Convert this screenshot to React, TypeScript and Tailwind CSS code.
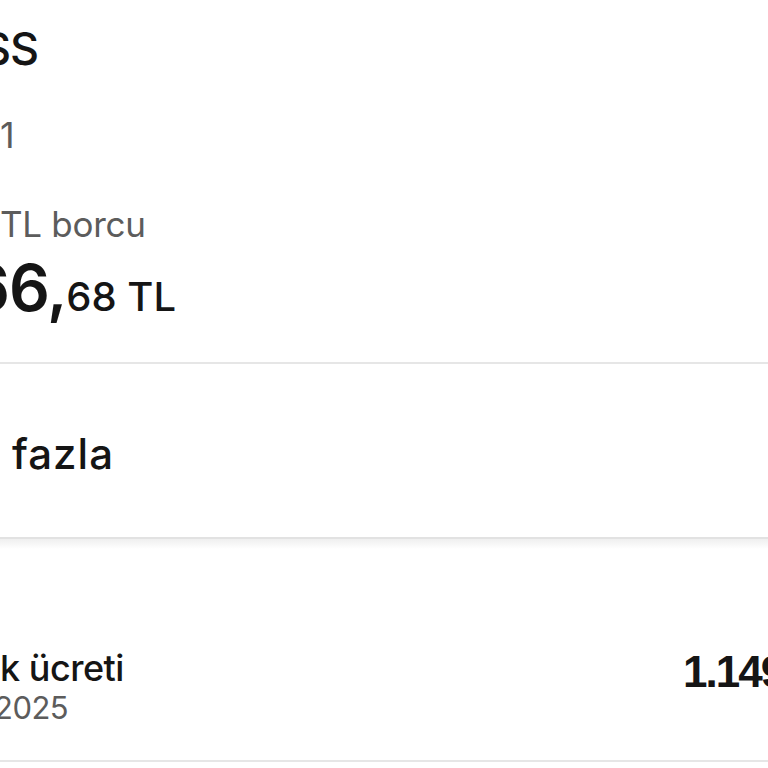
import React from "react";

export default function App() {
  const sans = { fontFamily: "Inter, 'Noto Sans', sans-serif" };
  return (
    <div className="w-[768px] h-[768px] overflow-hidden bg-white text-[#151515]" style={sans}>
      <div className="flex flex-col">
        <div className="h-[76px] pt-[22px] whitespace-nowrap text-[45px] leading-[54px] font-medium tracking-[-1px] ml-[-18px]">SS</div>
        <div className="h-[44px] mt-[37px] whitespace-nowrap text-[36px] leading-[44px] text-[#5c5c5c]">1</div>
        <div className="h-[44px] mt-[45px] whitespace-nowrap text-[35px] leading-[44px] text-[#5c5c5c] tracking-[-0.3px]">TL borcu</div>
        <div className="h-[72px] mt-[6px] whitespace-nowrap leading-[72px] font-semibold ml-[-31px] flex items-baseline">
          <span className="text-[64px] tracking-[-1px]">66,</span>
          <span className="text-[40px] font-medium">68 TL</span>
        </div>
      </div>
      <div className="mt-[38px] h-[2px] bg-[#e6e6e6]" />
      <div className="h-[173px] pt-[66px] pl-[12px] whitespace-nowrap text-[42px] leading-[48px] font-medium tracking-[1px]">fazla</div>
      <div className="h-[2px] bg-[#e2e2e2]" />
      <div className="h-[10px] bg-gradient-to-b from-[#efefef] to-white" />
      <div className="h-[211px] pt-[97px] flex">
        <div className="w-[683px] shrink-0 flex flex-col">
          <div className="h-[44px] whitespace-nowrap text-[36px] leading-[44px] font-medium tracking-[-0.5px]">k ücreti</div>
          <div className="h-[36px] whitespace-nowrap text-[31px] leading-[36px] text-[#5c5c5c] tracking-[-0.5px] ml-[-6px]">2025</div>
        </div>
        <div
          className="shrink-0 whitespace-nowrap text-[44px] leading-[44px] font-bold tracking-[-2px] mt-[4px]"
          style={{ fontFamily: "'Liberation Sans', Arial, sans-serif" }}
        >
          1.149,00 TL
        </div>
      </div>
      <div className="h-[2px] bg-[#e6e6e6]" />
    </div>
  );
}
